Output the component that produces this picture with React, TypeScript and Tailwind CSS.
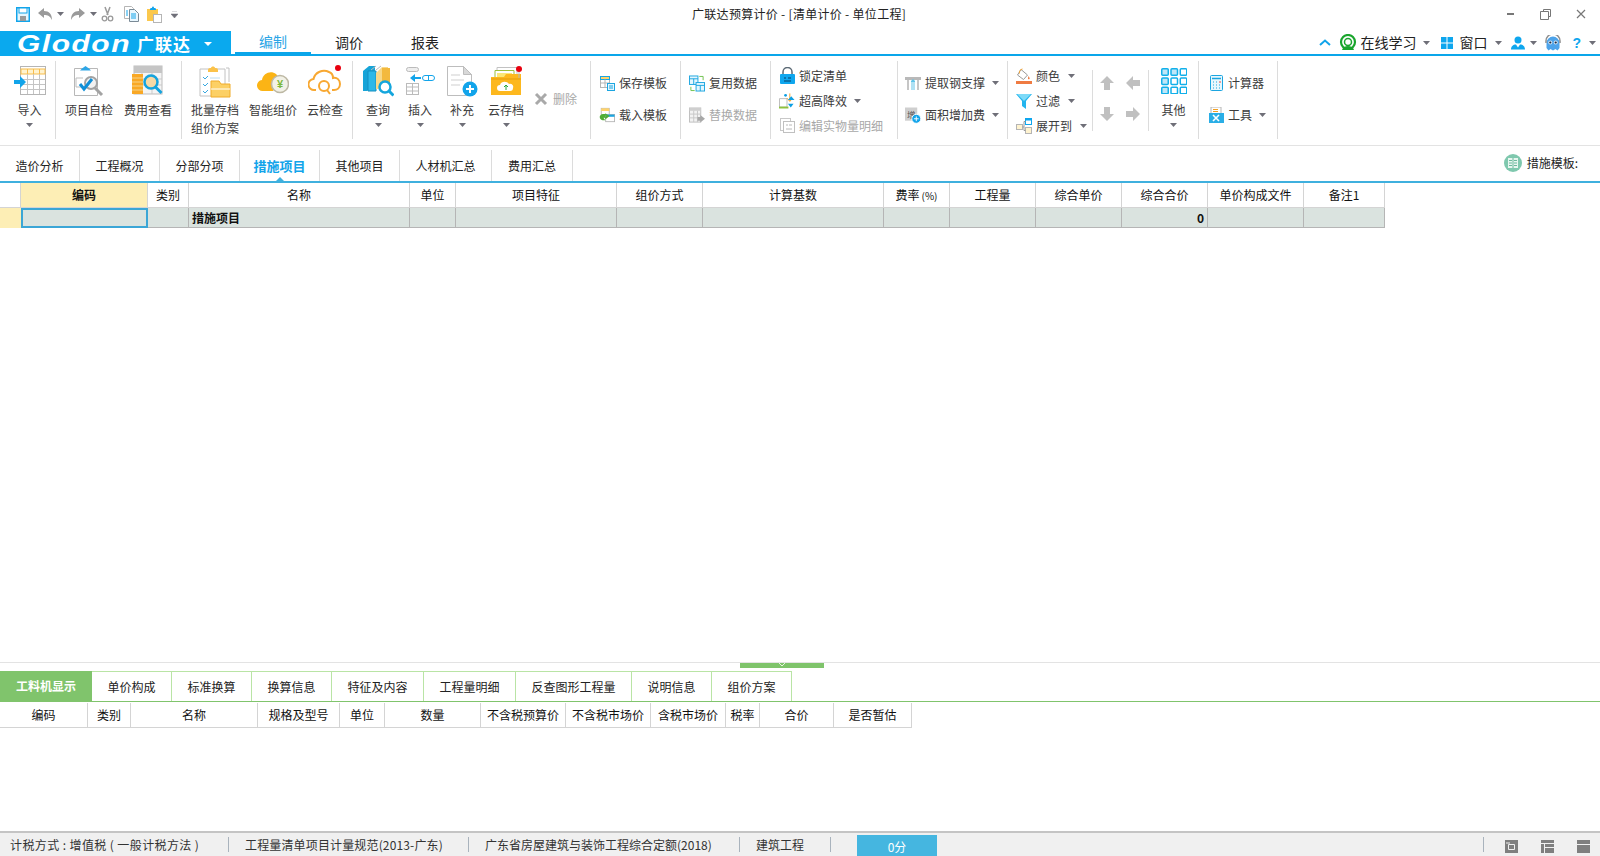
import React from "react";

const Caret = ({ className = "" }: { className?: string }) => (
  <svg width="7" height="4" viewBox="0 0 7 4" className={"shrink-0 " + className}>
    <path d="M0 0H7L3.5 4Z" fill="#6f6f78" />
  </svg>
);

const IconImport = () => (
  <svg width="32" height="30" viewBox="0 0 32 30">
    <rect x="6.5" y="0.5" width="25" height="28" fill="#fff" stroke="#b5b5b5" />
    <rect x="7" y="3" width="24" height="5" fill="#fff3cf" stroke="#f7bd4d" strokeWidth="1" />
    <path d="M13.5 3v5M19.5 3v5M25.5 3v5" stroke="#f7bd4d" />
    <path d="M7 13.5h24M7 18.5h24M7 23.5h24M13.5 8v20M19.5 8v20M25.5 8v20" stroke="#c4c4c4" />
    <path d="M0 14h6v-4l6 6-6 6v-4H0Z" fill="#12a4ea" />
  </svg>
);
const IconCheck = () => (
  <svg width="32" height="32" viewBox="0 0 32 32">
    <path d="M1.500 3.500h23v27h-23Z" fill="#fff" stroke="#b8b8b8" />
    <path d="M9 3.500 12.500 1l3.500 2.500 2 2h-11Z" fill="#2ea6e6" />
    <path d="M3 13h7M3 13v9h5" stroke="#bdbdbd" fill="none" />
    <circle cx="18" cy="18" r="6" fill="#f2f2f2" stroke="#a3a3a3" strokeWidth="2" />
    <path d="m22 23 7 7" stroke="#a3a3a3" strokeWidth="3" />
    <path d="m7 19 4 5 8-10" stroke="#0f8fd8" strokeWidth="3" fill="none" />
  </svg>
);
const IconFee = () => (
  <svg width="32" height="32" viewBox="0 0 32 32">
    <rect x="2" y="1" width="28" height="28" fill="#f4f4f4" stroke="#bdbdbd" />
    <rect x="2" y="1" width="28" height="7" fill="#c5c5c5" />
    <path d="M2 14h28M2 20h28M10 8v21M20 8v21" stroke="#c9c9c9" />
    <path d="M0 9h11v20H0Z" fill="#f9a825" />
    <path d="M0 13h11M0 17h11M0 21h11M0 25h11" stroke="#f6d38a" />
    <circle cx="19" cy="17" r="6.500" fill="#f6d9a6" stroke="#15a3dd" strokeWidth="2.500" />
    <path d="m23.500 22 6 6" stroke="#15a3dd" strokeWidth="3" />
  </svg>
);
const IconBatch = () => (
  <svg width="32" height="33" viewBox="0 0 32 33">
    <path d="M1 4h25v27H1Z" fill="#fff" stroke="#c2c2c2" />
    <path d="M27 3h3v14" stroke="#c2c2c2" fill="none" />
    <path d="M9 5c0-2 2-2 3-2 0-2 4-2 4 0 1 0 3 0 3 2v2H9Z" fill="#fbc24a" />
    <path d="m4 12 2 2 3-3M4 19l2 2 3-3M4 26l2 2 3-3" stroke="#3aa9e0" fill="none" />
    <path d="M11 13h10" stroke="#bcdcf0" />
    <path d="M12 16h8l2 3h9v13H12Z" fill="#fcd065" stroke="#f0ac2a" />
    <path d="M12 24h19" stroke="#fff" />
  </svg>
);
const IconSmart = () => (
  <svg width="32" height="28" viewBox="0 0 32 28">
    <path d="M6 24a5.500 5.500 0 0 1-1-11c1-7 9-10 14-6 2 2 2 3 3 5l-6 12Z" fill="#fbb415" />
    <circle cx="23" cy="17" r="8.500" fill="#f2f1e6" stroke="#bdb8a4" strokeWidth="1.500" />
    <text x="23" y="21" textAnchor="middle" fontSize="11" fontWeight="700" fill="#7cb83c" fontFamily="Liberation Sans, sans-serif">¥</text>
  </svg>
);
const IconCloudCheck = () => (
  <svg width="34" height="32" viewBox="0 0 34 32">
    <path d="M8 25H6.500a5.500 5.500 0 0 1-1-11C7 7 15 4 21 7c3 1 4 4 4 6 4-1 7 2 7 6s-3 6-6 6h-2" fill="none" stroke="#f8a832" strokeWidth="2" />
    <circle cx="16" cy="21" r="5" fill="#fff" stroke="#f8a832" strokeWidth="2" />
    <path d="m19 25 3 4" stroke="#f8a832" strokeWidth="2" />
    <circle cx="30" cy="3" r="3" fill="#e8000f" />
  </svg>
);
const IconQuery = () => (
  <svg width="32" height="32" viewBox="0 0 32 32">
    <path d="M1 6 7 1h6v20l-8 5H1Z" fill="#16a4d8" />
    <path d="M6 6h8v20H6Z" fill="#2cb8e8" stroke="#148fc0" />
    <path d="M14 8 20 2h6v22H14Z" fill="#f8d888" />
    <path d="M20 3h8v22h-8Z" fill="#f3b93e" />
    <path d="M9 5l5-4M14 5l5-4" stroke="#bbb" />
    <circle cx="23" cy="22" r="5.500" fill="#fff" stroke="#14a6dd" strokeWidth="2.500" />
    <path d="m27 26 4.500 4.500" stroke="#14a6dd" strokeWidth="3" />
  </svg>
);
const IconInsert = () => (
  <svg width="30" height="30" viewBox="0 0 30 30">
    <rect x="1.500" y="1.500" width="12" height="4" rx="2" fill="#eee" stroke="#bbb" />
    <path d="m5 12 5-4v3h6v2h-6v3Z" fill="#12a4ea" />
    <rect x="17.500" y="9.500" width="12" height="5" rx="2.500" fill="#fff" stroke="#12a4ea" />
    <path d="M23.500 9.500v5" stroke="#12a4ea" />
    <rect x="1.500" y="17.500" width="12" height="11" fill="#fff" stroke="#bbb" />
    <path d="M1.500 21h12M1.500 25h12M7.500 17.500v11" stroke="#bbb" />
  </svg>
);
const IconAdd = () => (
  <svg width="32" height="32" viewBox="0 0 32 32">
    <path d="M1.500 1.500h16l8 8v21h-24Z" fill="#fff" stroke="#bdbdbd" />
    <path d="M17.500 1.500v8h8Z" fill="#d8d8d8" stroke="#bdbdbd" />
    <path d="M5 10h9M5 15h13M5 20h9" stroke="#cfcfcf" />
    <circle cx="24" cy="24" r="7.500" fill="#12a4ea" />
    <path d="M24 20v8M20 24h8" stroke="#fff" strokeWidth="2" />
  </svg>
);
const IconCloudSave = () => (
  <svg width="32" height="31" viewBox="0 0 32 31">
    <path d="M7 1.500h20v10H7Z" fill="#fff" stroke="#c2c2c2" />
    <path d="M5 4.500h19v10H5Z" fill="#fff" stroke="#9dbf3b" />
    <path d="M7 7h15v8H7Z" fill="#fbe777" />
    <path d="M1 11h13l2-3h15v21H1Z" fill="#fdb81e" />
    <path d="M1 13h30" stroke="#e59d0a" />
    <path d="M10 25a3 3 0 0 1 0-6c1-4 7-4 9-1 3-1 5 2 4 4 0 2-1 3-3 3Z" fill="#fff" />
    <path d="M16 24v-5m-2 2 2-2 2 2" stroke="#2aa83c" fill="none" />
    <path d="M29 4v8" stroke="#b8b8b8" />
    <circle cx="29" cy="3" r="3" fill="#e8000f" />
  </svg>
);
const IconX = () => (
  <svg width="14" height="14" viewBox="0 0 14 14">
    <path d="m2 2 10 10M12 2 2 12" stroke="#a9a9a9" strokeWidth="3" />
  </svg>
);
const IconSaveTpl = () => (
  <svg width="16" height="16" viewBox="0 0 16 16">
    <rect x="1.500" y="1.500" width="9" height="11" fill="#fff" stroke="#b5b5b5" />
    <rect x="1.500" y="1.500" width="9" height="3" fill="#ffd36a" stroke="#1ba5e0" />
    <path d="M1.500 8h9M6 4.500v8" stroke="#b5b5b5" />
    <rect x="8.500" y="8.500" width="7" height="7" fill="#e4f6fe" stroke="#1ba5e0" />
    <path d="M10 11h4M10 13h4" stroke="#1ba5e0" />
  </svg>
);
const IconLoadTpl = () => (
  <svg width="18" height="16" viewBox="0 0 18 16">
    <rect x="2.500" y="0.500" width="9" height="10" fill="#fff" stroke="#b5b5b5" />
    <rect x="2.500" y="0.500" width="9" height="3" fill="#ffd36a" />
    <rect x="7.500" y="7.500" width="10" height="8" fill="#fff" stroke="#b5b5b5" />
    <rect x="7.500" y="7.500" width="10" height="2.500" fill="#1ba5e0" />
    <path d="M1 9a4 4 0 0 1 4-2h2v3l3-3-3 2V6l5 3-5 4v-2H5l2 3H4a4 4 0 0 1-3-5Z" fill="#4fae34" />
  </svg>
);
const IconReuse = () => (
  <svg width="17" height="17" viewBox="0 0 17 17">
    <rect x="0.500" y="0.500" width="9" height="9" fill="#e4f6fe" stroke="#1ba5e0" />
    <path d="M0.500 3.500h9M5 3.500v6" stroke="#1ba5e0" />
    <rect x="7.500" y="7.500" width="9" height="9" fill="#e4f6fe" stroke="#1ba5e0" />
    <path d="M7.500 10.500h9M12 10.500v6" stroke="#1ba5e0" />
    <path d="M11 1h4v4M2 12v4h4" stroke="#6cc04a" fill="none" />
  </svg>
);
const IconReplace = () => (
  <svg width="17" height="17" viewBox="0 0 17 17">
    <rect x="0.500" y="0.500" width="12" height="15" fill="#f2f2f2" stroke="#bdbdbd" />
    <rect x="0.500" y="0.500" width="12" height="3" fill="#cfcfcf" />
    <path d="M0.500 7h12M0.500 11h12M5 3.500v12M9 3.500v12" stroke="#c6c6c6" />
    <path d="M9 10h3V8l5 4-5 4v-2H9Z" fill="#a8a8a8" />
  </svg>
);
const IconLock = () => (
  <svg width="15" height="17" viewBox="0 0 15 17">
    <path d="M3 8V5a4.500 4.500 0 0 1 9 0v3" fill="none" stroke="#5d6b76" strokeWidth="1.500" />
    <rect x="0" y="7" width="15" height="10" rx="1" fill="#0ea6ee" />
    <path d="M4 11h2M8 11h3M4 14h7" stroke="#053e68" />
  </svg>
);
const IconEfficiency = () => (
  <svg width="17" height="17" viewBox="0 0 17 17">
    <path d="M0.500 6.500h8v9h-8Z" fill="#fff" stroke="#b9b9b9" />
    <path d="M0 16h10" stroke="#8fc23e" strokeWidth="2" />
    <path d="M11.500 1v8M8.500 6l3 3.500 3-3.500" stroke="#f2a020" fill="none" />
    <path d="M12.500 5v11M9.500 8h7l-3.500-4ZM9.500 12l3 4 3-4Z" fill="#0d9fe3" />
    <circle cx="7" cy="3" r="1.500" fill="#0d9fe3" />
  </svg>
);
const IconEdit = () => (
  <svg width="15" height="15" viewBox="0 0 15 15">
    <rect x="0.500" y="0.500" width="10" height="12" fill="#fff" stroke="#c8c8c8" />
    <rect x="3.500" y="3.500" width="11" height="11" fill="#fff" stroke="#c0c0c0" />
    <path d="M6 7h2M9 7h3M6 11h6" stroke="#b8b8b8" />
  </svg>
);
const IconRebar = () => (
  <svg width="16" height="15" viewBox="0 0 16 15">
    <path d="M0 1h16v3H0Z" fill="#b9b9b9" />
    <path d="M2 4h2v10H2ZM12 4h2v10h-2Z" fill="#c6c6c6" />
    <path d="M6 14V5L8 3l2 2v9" fill="#60c3e8" />
    <path d="M7 6v8M9 6v8" stroke="#fff" />
  </svg>
);
const IconArea = () => (
  <svg width="17" height="17" viewBox="0 0 17 17">
    <rect x="0" y="0" width="13" height="14" fill="#cfcfcf" />
    <text x="6.500" y="11" textAnchor="middle" fontSize="9" fill="#555" fontFamily="Noto Sans CJK SC, sans-serif">增</text>
    <circle cx="12" cy="12" r="4.800" fill="#12a4ea" stroke="#fff" />
    <path d="M12 9.500v5M9.500 12h5" stroke="#fff" />
  </svg>
);
const IconColor = () => (
  <svg width="16" height="16" viewBox="0 0 16 16">
    <path d="M5 1.500 11.500 7l-4 4.500L1.500 7Z" fill="#fff" stroke="#9a9a9a" />
    <path d="M3.500 5.500C3 3 4 1.500 6.500 1" stroke="#f0a53a" fill="none" />
    <path d="M12.500 8c1 1.500 1.500 2.500 1 3-.8.600-1.800 0-1.500-1Z" fill="#ef7b42" />
    <rect x="0" y="13" width="16" height="3" fill="#ef7b42" />
  </svg>
);
const IconFilter = () => (
  <svg width="16" height="16" viewBox="0 0 16 16">
    <path d="M0 1h16l-6 7v8l-4-3V8Z" fill="#23b5ee" />
    <path d="M1 1h14L8 8Z" fill="#7ddaf8" />
  </svg>
);
const IconExpand = () => (
  <svg width="16" height="16" viewBox="0 0 16 16">
    <rect x="0.500" y="6.500" width="6" height="5" fill="#fff3cf" stroke="#b5b5b5" />
    <rect x="9.500" y="0.500" width="6" height="6" fill="#fff" stroke="#0ea6ee" />
    <rect x="9.500" y="9.500" width="6" height="6" fill="#fff3cf" stroke="#b5b5b5" />
    <path d="M6.500 9H8M8 3.500v9M8 3.500h1.500M8 12.500h1.500" stroke="#9a9a9a" />
    <rect x="9.500" y="0.500" width="6" height="2" fill="#0ea6ee" />
  </svg>
);
const Arrow = ({ rotate }: { rotate: string }) => (
  <svg width="16" height="16" viewBox="0 0 16 16" className={rotate}>
    <path d="M8 1 15 8h-4v7H5V8H1Z" fill="#c0c0c0" />
  </svg>
);
const IconOther = () => (
  <svg width="26" height="26" viewBox="0 0 26 26">
    {[0, 1, 2].flatMap((r) =>
      [0, 1, 2].map((c) => (
        <rect
          key={r + "-" + c}
          x={0.75 + c * 9.25}
          y={0.75 + r * 9.25}
          width="6.500"
          height="6.500"
          rx="1"
          fill={c === 0 || (r === 0 && c === 1) ? "#bfe6f7" : "#fff"}
          stroke="#12b0ea"
          strokeWidth="1.500"
        />
      ))
    )}
  </svg>
);
const IconCalc = () => (
  <svg width="13" height="16" viewBox="0 0 13 16">
    <rect x="0.500" y="0.500" width="12" height="15" rx="1" fill="#e8f7fd" stroke="#1ba5e0" />
    <path d="M2 3.500h9" stroke="#1ba5e0" strokeWidth="1.500" />
    <path d="M3 7h1M6 7h1M3 10h1M6 10h1M9 10h1M3 13h1M6 13h1M9 13h1" stroke="#1ba5e0" />
    <path d="M9 7h2" stroke="#e8443a" />
  </svg>
);
const IconTools = () => (
  <svg width="15" height="16" viewBox="0 0 15 16">
    <rect x="2" y="0" width="10" height="7" fill="#fff" stroke="#b5b5b5" />
    <path d="M4 2.500h5M4 4.500h5" stroke="#f2a020" />
    <rect x="0" y="6" width="15" height="10" fill="#2aaee6" />
    <path d="m4 8 6 6M10 8l-6 6" stroke="#fff" strokeWidth="1.600" />
  </svg>
);
const IconHeadset = () => (
  <svg width="18" height="18" viewBox="0 0 18 18">
    <circle cx="9" cy="8" r="7" fill="none" stroke="#1aa52d" strokeWidth="2.200" />
    <circle cx="9" cy="8" r="3.500" fill="none" stroke="#1aa52d" strokeWidth="1.500" />
    <path d="M3 16c1-3 3-4 6-4s5 1 6 4Z" fill="#1aa52d" />
  </svg>
);
const IconUser = () => (
  <svg width="14" height="14" viewBox="0 0 14 14">
    <circle cx="7" cy="4" r="3.500" fill="#0ea6ee" />
    <path d="M0 13.500c0-3 2-5 5-5l2 3 2-3c3 0 5 2 5 5Z" fill="#0ea6ee" />
  </svg>
);
const IconMascot = () => (
  <svg width="16" height="16" viewBox="0 0 16 16">
    <path d="M1.500 8a6.500 6.500 0 0 1 13 0v5l-2 2.500L10.500 14l-2.500 1.500L5.500 14l-2 1.500-2-2.500Z" fill="#4da3ea" />
    <path d="M1 8V6a7 7 0 0 1 14 0v2" fill="none" stroke="#8e8e8e" strokeWidth="1.500" />
    <circle cx="5.300" cy="7.500" r="2" fill="#d5e6f5" />
    <circle cx="10.700" cy="7.500" r="2" fill="#d5e6f5" />
    <circle cx="5.300" cy="7.500" r="1.100" fill="#1a2a40" />
    <circle cx="10.700" cy="7.500" r="1.100" fill="#1a2a40" />
  </svg>
);
const IconBook = () => (
  <svg width="18" height="18" viewBox="0 0 18 18">
    <circle cx="9" cy="9" r="9" fill="#7fc8ae" />
    <rect x="4" y="4" width="10" height="10" fill="#e8f6f0" />
    <path d="M9 4v10M5 6.500h3M5 9h3M5 11.500h3M10 6.500h3M10 9h3M10 11.500h3" stroke="#6bb89c" />
  </svg>
);

function Big({
  w,
  icon,
  label,
  label2,
  caret,
}: {
  w: string;
  icon: React.ReactNode;
  label: string;
  label2?: string;
  caret?: boolean;
}) {
  return (
    <div className={"flex flex-col items-center shrink-0 pt-[8px] " + w}>
      <div className="h-[34px] flex items-center justify-center">{icon}</div>
      <div className="mt-[3px] leading-[18px] whitespace-nowrap">{label}</div>
      {label2 && <div className="leading-[18px] whitespace-nowrap">{label2}</div>}
      {caret && <Caret className="mt-[4px]" />}
    </div>
  );
}

function Small({
  icon,
  label,
  caret,
  caretClass = "ml-[7px]",
  h = "h-[20px]",
  disabled,
}: {
  icon: React.ReactNode;
  label: string;
  caret?: boolean;
  caretClass?: string;
  h?: string;
  disabled?: boolean;
}) {
  return (
    <div className={"flex items-center whitespace-nowrap " + h + (disabled ? " text-[#a8a8a8]" : "")}>
      <div className="w-[16px] flex justify-center shrink-0">{icon}</div>
      <span className="ml-[4px]">{label}</span>
      {caret && <Caret className={caretClass} />}
    </div>
  );
}

const Sep = () => <div className="w-px h-[78px] mt-[5px] bg-[#dcdcdc] shrink-0" />;
const ShortSep = () => <div className="w-px h-[61px] mt-[14px] bg-[#dcdcdc] shrink-0" />;

const topCols = [
  { t: "", cls: "" },
  { t: "编码", cls: "bg-[#fdeeb5] font-bold" },
  { t: "类别", cls: "" },
  { t: "名称", cls: "" },
  { t: "单位", cls: "" },
  { t: "项目特征", cls: "" },
  { t: "组价方式", cls: "" },
  { t: "计算基数", cls: "" },
  { t: "费率(%)", cls: "" },
  { t: "工程量", cls: "" },
  { t: "综合单价", cls: "" },
  { t: "综合合价", cls: "" },
  { t: "单价构成文件", cls: "" },
  { t: "备注1", cls: "" },
];
const topGrid =
  "grid grid-cols-[21px_127px_41px_221px_46px_161px_86px_181px_66px_86px_86px_86px_96px_81px] w-[1385px]";

const lowerCols = ["编码", "类别", "名称", "规格及型号", "单位", "数量", "不含税预算价", "不含税市场价", "含税市场价", "税率", "合价", "是否暂估"];

const lowerTabs = [
  { t: "单价构成", w: "w-[80px]" },
  { t: "标准换算", w: "w-[80px]" },
  { t: "换算信息", w: "w-[80px]" },
  { t: "特征及内容", w: "w-[92px]" },
  { t: "工程量明细", w: "w-[92px]" },
  { t: "反查图形工程量", w: "w-[116px]" },
  { t: "说明信息", w: "w-[80px]" },
  { t: "组价方案", w: "w-[80px]" },
];

const sheetTabs = [
  { t: "造价分析", w: "w-[80px]" },
  { t: "工程概况", w: "w-[80px]" },
  { t: "分部分项", w: "w-[80px]" },
  { t: "措施项目", w: "w-[80px]", active: true },
  { t: "其他项目", w: "w-[80px]" },
  { t: "人材机汇总", w: "w-[92px]" },
  { t: "费用汇总", w: "w-[81px]" },
];

export default function App() {
  return (
    <div className="w-[1600px] h-[856px] overflow-hidden bg-white flex flex-col text-[12px] text-[#3c3c3c] [font-family:'Noto_Sans_CJK_SC','Liberation_Sans',sans-serif]">
      {/* Title bar */}
      <div className="h-[31px] shrink-0 flex items-center pb-[3px]">
        <div className="w-[200px] flex items-center pl-[16px] shrink-0">
          <svg width="14" height="15" viewBox="0 0 14 15">
            <rect x="0.750" y="0.750" width="12.500" height="13.500" fill="#e6f6fd" stroke="#12a4ea" strokeWidth="1.500" />
            <rect x="3" y="1" width="8" height="5" fill="#fff" stroke="#12a4ea" />
            <rect x="4" y="9" width="6" height="5" fill="#9a9a9a" />
          </svg>
          <svg width="16" height="14" viewBox="0 0 16 14" className="ml-[7px]">
            <path d="M7 1 1 6l6 5V8c4 0 6 1 8 5 0-6-3-9-8-9Z" fill="#9a9a9a" />
          </svg>
          <Caret className="ml-[4px]" />
          <svg width="16" height="14" viewBox="0 0 16 14" className="ml-[6px]">
            <path d="M9 1l6 5-6 5V8c-4 0-6 1-8 5 0-6 3-9 8-9Z" fill="#9a9a9a" />
          </svg>
          <Caret className="ml-[4px]" />
          <svg width="13" height="16" viewBox="0 0 13 16" className="ml-[4px]">
            <path d="M4 1l3 8M9 1 6 9" stroke="#9a9a9a" strokeWidth="1.500" />
            <circle cx="3.500" cy="12.500" r="2.300" fill="#fff" stroke="#9a9a9a" strokeWidth="1.300" />
            <circle cx="9.500" cy="12.500" r="2.300" fill="#fff" stroke="#9a9a9a" strokeWidth="1.300" />
          </svg>
          <svg width="15" height="16" viewBox="0 0 15 16" className="ml-[10px]">
            <path d="M.5.500h7l2 2v10h-9Z" fill="#fff" stroke="#b5b5b5" />
            <path d="M5.500 3.500h5l4 4v8h-9Z" fill="#eaf7fe" stroke="#7a8a96" />
            <path d="M2 5h2M2 7h2M2 9h2M7 8h5M7 10h5M7 12h5" stroke="#12a4ea" />
          </svg>
          <svg width="15" height="17" viewBox="0 0 15 17" className="ml-[8px]">
            <path d="M0 3h11v12H0Z" fill="#fbc84d" />
            <path d="M3 3c0-1 1-1 2-1 0-2 2-2 2 0 1 0 2 0 2 1v1H3Z" fill="#12a4ea" />
            <rect x="6.500" y="8.500" width="8" height="8" fill="#fff" stroke="#b5b5b5" />
          </svg>
          <svg width="7" height="7" viewBox="0 0 7 7" className="ml-[9px]">
            <path d="M1 0h5M0 3h7L3.500 7Z" fill="#6f6f78" stroke="#6f6f78" strokeWidth="0.500" />
          </svg>
        </div>
        <div className="w-[1292px] pl-[492px] whitespace-nowrap text-[#222] tracking-[0.3px]">广联达预算计价 - [清单计价 - 单位工程]</div>
        <div className="flex items-center shrink-0">
          <div className="w-[7px] h-[2px] bg-[#777] ml-[15px]" />
          <svg width="11" height="11" viewBox="0 0 11 11" className="ml-[26px]">
            <path d="M3.500 2.500V.5h7v7h-2M.5 2.500h8v8h-8Z" fill="none" stroke="#777" />
          </svg>
          <svg width="10" height="10" viewBox="0 0 10 10" className="ml-[25px]">
            <path d="m1 1 8 8M9 1 1 9" stroke="#777" strokeWidth="1.200" />
          </svg>
        </div>
      </div>

      {/* Menu bar */}
      <div className="h-[25px] shrink-0 flex border-b-2 border-[#0aa6ea] box-border">
        <div className="w-[231px] h-[25px] bg-[#0aa9ee] flex items-center text-white shrink-0 pl-[17px]">
          <span className="inline-block origin-left scale-x-[1.25] [font-family:'Liberation_Sans',sans-serif] italic font-bold text-[24px] leading-none tracking-[1.200px] w-[120px] whitespace-nowrap">Glodon</span>
          <span className="font-bold text-[17px] leading-none tracking-[1px] whitespace-nowrap">广联达</span>
          <svg width="8" height="4" viewBox="0 0 8 4" className="ml-[13px]">
            <path d="M0 0h8L4 4Z" fill="#fff" />
          </svg>
        </div>
        <div className="flex h-[23px] pl-[4px] text-[14px] text-[#222] shrink-0">
          <div className="w-[76px] h-[21px] box-content flex items-center justify-center text-[#2aa5e6] border-b-2 border-[#0aa6ea]">编制</div>
          <div className="w-[76px] flex items-center justify-center">调价</div>
          <div className="w-[76px] flex items-center justify-center">报表</div>
        </div>
        <div className="ml-auto flex items-center h-[23px] text-[14px] text-[#222] pr-[4px]">
          <svg width="12" height="7" viewBox="0 0 12 7" className="mr-[8px]">
            <path d="M1 6l5-4.500L11 6" fill="none" stroke="#12a4ea" strokeWidth="2" />
          </svg>
          <IconHeadset />
          <span className="ml-[3px] whitespace-nowrap">在线学习</span>
          <Caret className="ml-[7px]" />
          <svg width="12" height="12" viewBox="0 0 12 12" className="ml-[11px]">
            <path d="M0 0h5.500v5.500H0ZM6.500 0H12v5.500H6.500ZM0 6.500h5.500V12H0ZM6.500 6.500H12V12H6.500Z" fill="#0ea6ee" />
          </svg>
          <span className="ml-[6px] whitespace-nowrap">窗口</span>
          <Caret className="ml-[8px]" />
          <div className="ml-[9px]"><IconUser /></div>
          <Caret className="ml-[5px]" />
          <div className="ml-[8px]"><IconMascot /></div>
          <span className="ml-[11px] text-[#0ea6ee] font-bold text-[14px] leading-none [font-family:'Liberation_Sans',sans-serif]">?</span>
          <Caret className="ml-[8px]" />
        </div>
      </div>

      {/* Ribbon */}
      <div className="h-[89px] shrink-0 flex">
        <div className="w-[55px] shrink-0 pl-[4px]">
          <Big w="w-[51px]" icon={<IconImport />} label="导入" caret />
        </div>
        <Sep />
        <div className="w-[125px] shrink-0 pl-[4px] flex">
          <Big w="w-[58px]" icon={<IconCheck />} label="项目自检" />
          <Big w="w-[60px]" icon={<IconFee />} label="费用查看" />
        </div>
        <Sep />
        <div className="w-[170px] shrink-0 pl-[4px] flex">
          <Big w="w-[58px]" icon={<IconBatch />} label="批量存档" label2="组价方案" />
          <Big w="w-[58px]" icon={<IconSmart />} label="智能组价" />
          <Big w="w-[46px]" icon={<IconCloudCheck />} label="云检查" />
        </div>
        <Sep />
        <div className="w-[237px] shrink-0 pl-[4px] flex">
          <Big w="w-[42px]" icon={<IconQuery />} label="查询" caret />
          <Big w="w-[42px]" icon={<IconInsert />} label="插入" caret />
          <Big w="w-[42px]" icon={<IconAdd />} label="补充" caret />
          <Big w="w-[46px]" icon={<IconCloudSave />} label="云存档" caret />
          <div className="flex items-center h-[20px] mt-[33px] ml-[5px] text-[#a8a8a8] whitespace-nowrap">
            <IconX />
            <span className="ml-[5px]">删除</span>
          </div>
        </div>
        <Sep />
        <div className="w-[89px] shrink-0 pl-[8px] pt-[17px] flex flex-col gap-[12px]">
          <Small icon={<IconSaveTpl />} label="保存模板" />
          <Small icon={<IconLoadTpl />} label="载入模板" />
        </div>
        <Sep />
        <div className="w-[89px] shrink-0 pl-[8px] pt-[17px] flex flex-col gap-[12px]">
          <Small icon={<IconReuse />} label="复用数据" />
          <Small icon={<IconReplace />} label="替换数据" disabled />
        </div>
        <Sep />
        <div className="w-[126px] shrink-0 pl-[8px] pt-[7px] flex flex-col">
          <Small h="h-[25px]" icon={<IconLock />} label="锁定清单" />
          <Small h="h-[25px]" icon={<IconEfficiency />} label="超高降效" caret />
          <Small h="h-[25px]" icon={<IconEdit />} label="编辑实物量明细" disabled />
        </div>
        <Sep />
        <div className="w-[109px] shrink-0 pl-[7px] pt-[17px] flex flex-col gap-[12px]">
          <Small icon={<IconRebar />} label="提取钢支撑" caret />
          <Small icon={<IconArea />} label="面积增加费" caret />
        </div>
        <Sep />
        <div className="w-[84px] shrink-0 pl-[8px] pt-[7px] flex flex-col">
          <Small h="h-[25px]" icon={<IconColor />} label="颜色" caret caretClass="ml-[8px]" />
          <Small h="h-[25px]" icon={<IconFilter />} label="过滤" caret caretClass="ml-[8px]" />
          <Small h="h-[25px]" icon={<IconExpand />} label="展开到" caret caretClass="ml-[8px]" />
        </div>
        <ShortSep />
        <div className="w-[55px] shrink-0 pl-[1px] pt-[11px]">
          <div className="grid grid-cols-[26px_26px] grid-rows-[31px_31px] place-items-center">
            <Arrow rotate="" />
            <Arrow rotate="-rotate-90" />
            <Arrow rotate="rotate-180" />
            <Arrow rotate="rotate-90" />
          </div>
        </div>
        <ShortSep />
        <div className="w-[49px] shrink-0">
          <Big w="w-[49px]" icon={<IconOther />} label="其他" caret />
        </div>
        <Sep />
        <div className="w-[78px] shrink-0 pl-[9px] pt-[17px] flex flex-col gap-[12px]">
          <Small icon={<IconCalc />} label="计算器" />
          <Small icon={<IconTools />} label="工具" caret />
        </div>
        <Sep />
      </div>
      <div className="h-px shrink-0 bg-[#e3e3e3]" />

      {/* Sheet tabs */}
      <div className="h-[37px] shrink-0 flex border-b-2 border-[#3fb0de] box-border">
        {sheetTabs.map((s) => (
          <div
            key={s.t}
            className={
              "h-[31px] mt-[4px] flex items-center justify-center border-r border-[#dcdcdc] box-border shrink-0 whitespace-nowrap " +
              s.w +
              (s.active ? " relative font-bold text-[13px] text-[#12a4ea]" : " text-[#222]")
            }
          >
            {s.t}
            {s.active && (
              <svg width="8" height="4" viewBox="0 0 8 4" className="absolute bottom-0 left-[36px]">
                <path d="M0 4 4 0l4 4Z" fill="#3fb0de" />
              </svg>
            )}
          </div>
        ))}
        <div className="ml-auto flex items-center pr-[22px] text-[#222] pb-[2px]">
          <IconBook />
          <span className="ml-[5px]">措施模板:</span>
        </div>
      </div>

      {/* Main grid */}
      <div className="flex-1 min-h-0 text-[#111]">
        <div className={topGrid + " h-[25px]"}>
          {topCols.map((c, i) => (
            <div key={i} className={"flex items-center justify-center border-r border-b border-[#d4d4d4] box-border whitespace-nowrap " + c.cls}>
              {c.t === "费率(%)" ? (
                <span>费率<span className="text-[10px] ml-[2px]">(%)</span></span>
              ) : (
                c.t
              )}
            </div>
          ))}
        </div>
        <div className={topGrid + " h-[20px] bg-[#dae3df]"}>
          {topCols.map((c, i) => {
            if (i === 0) return <div key={i} className="bg-[#fdeeb5] border-b border-[#fdeeb5]" />;
            if (i === 1) return <div key={i} className="border-2 border-[#3ba6d6] box-border" />;
            if (i === 3)
              return (
                <div key={i} className="flex items-center pl-[3px] font-bold border-r border-b border-[#b5b5b5] box-border whitespace-nowrap">措施项目</div>
              );
            if (i === 11)
              return (
                <div key={i} className="flex items-center justify-end pr-[3px] font-bold border-r border-b border-[#b5b5b5] box-border">0</div>
              );
            return <div key={i} className="border-r border-b border-[#b5b5b5] box-border" />;
          })}
        </div>
      </div>

      {/* Splitter */}
      <div className="h-[9px] shrink-0 border-t border-[#e3e3e3] box-border relative">
        <div className="absolute left-[740px] top-0 w-[84px] h-[5px] bg-[#7fc46b] flex justify-center">
          <svg width="10" height="5" viewBox="0 0 10 5">
            <path d="m2 0 3 3 3-3" fill="none" stroke="#e8f5e2" />
          </svg>
        </div>
      </div>

      {/* Lower tabs */}
      <div className="h-[31px] shrink-0 flex border-b border-[#80c46c] box-border">
        <div className="w-[92px] h-[30px] flex items-center justify-center bg-[#80c46c] text-white font-bold shrink-0">工料机显示</div>
        {lowerTabs.map((t) => (
          <div key={t.t} className={"h-[30px] flex items-center justify-center border-t border-r border-[#b9e4a5] box-border text-[#222] whitespace-nowrap shrink-0 " + t.w}>
            {t.t}
          </div>
        ))}
      </div>

      {/* Lower table */}
      <div className="h-[129px] shrink-0 pt-px text-[#111]">
        <div className="grid grid-cols-[88px_43px_127px_82px_45px_96px_85px_85px_75px_34px_74px_78px] w-[912px] h-[25px]">
          {lowerCols.map((c) => (
            <div key={c} className="flex items-center justify-center border-r border-b border-[#d4d4d4] box-border whitespace-nowrap">{c}</div>
          ))}
        </div>
      </div>

      {/* Status bar */}
      <div className="h-[25px] shrink-0 bg-[#f0f0f0] border-t-2 border-[#c4c4c4] box-border flex text-[#333]">
        <div className="w-[228px] pl-[10px] pt-[4px] leading-[16px] whitespace-nowrap shrink-0 tracking-[0.4px]">计税方式 : 增值税 ( 一般计税方法 )</div>
        <div className="w-px h-[15px] mt-[4px] bg-[#a9b3bd] shrink-0" />
        <div className="w-[239px] pl-[16px] pt-[4px] leading-[16px] whitespace-nowrap shrink-0 tracking-[0.15px]">工程量清单项目计量规范(2013-广东)</div>
        <div className="w-px h-[15px] mt-[4px] bg-[#a9b3bd] shrink-0" />
        <div className="w-[270px] pl-[16px] pt-[4px] leading-[16px] whitespace-nowrap shrink-0">广东省房屋建筑与装饰工程综合定额(2018)</div>
        <div className="w-px h-[15px] mt-[4px] bg-[#a9b3bd] shrink-0" />
        <div className="w-[90px] pl-[16px] pt-[4px] leading-[16px] whitespace-nowrap shrink-0">建筑工程</div>
        <div className="w-px h-[15px] mt-[4px] bg-[#a9b3bd] shrink-0" />
        <div className="w-[80px] h-[23px] ml-[26px] mt-[2px] bg-[#45b6e0] text-white flex items-center justify-center shrink-0">0分</div>
        <div className="w-[546px] shrink-0" />
        <div className="w-px h-[15px] mt-[4px] bg-[#a9b3bd] shrink-0" />
        <svg width="13" height="13" viewBox="0 0 13 13" className="ml-[21px] mt-[7px] shrink-0">
          <path d="M0 0h13v13H0Z" fill="#7f7f7f" />
          <path d="M3.500 4.500h6v5h-6ZM1 3h4" fill="none" stroke="#f0f0f0" />
        </svg>
        <svg width="13" height="13" viewBox="0 0 13 13" className="ml-[23px] mt-[7px] shrink-0">
          <path d="M0 0h13v3H0ZM0 4h3v9H0ZM4 4h9v3H4ZM4 8h9v5H4Z" fill="#7f7f7f" />
        </svg>
        <svg width="13" height="13" viewBox="0 0 13 13" className="ml-[23px] mt-[7px] shrink-0">
          <path d="M0 0h13v4H0ZM0 5h13v8H0Z" fill="#7f7f7f" />
        </svg>
      </div>
    </div>
  );
}
